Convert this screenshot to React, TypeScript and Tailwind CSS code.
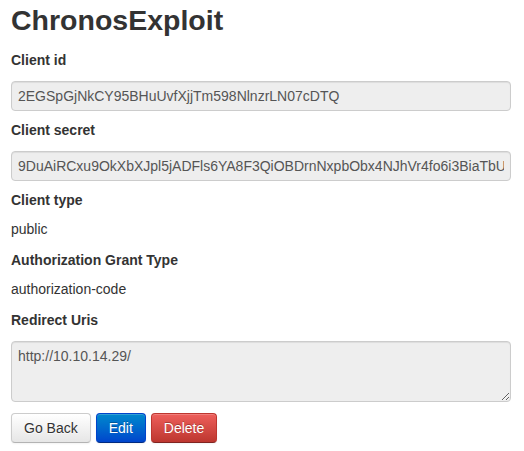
const inputClass =
  'block w-[500px] h-[30px] px-[6px] py-[4px] text-[14px] leading-[20px] text-[#555] bg-[#eeeeee] border border-[#cccccc] rounded-[4px] shadow-[inset_0_1px_1px_rgba(0,0,0,0.075)] outline-none cursor-not-allowed';

const btnBase =
  'h-[30px] px-[12px] py-[4px] text-[14px] leading-[20px] rounded-[4px] border shadow-[inset_0_1px_0_rgba(255,255,255,0.2),0_1px_2px_rgba(0,0,0,0.05)]';

const Label = ({ children, className = '' }: { children: string; className?: string }) => (
  <div className={`text-[14px] leading-[20px] font-bold ${className}`}>{children}</div>
);

export default function App() {
  return (
    <div className="min-h-screen bg-white pl-[11px] pr-[13px] text-[#333333] font-['Liberation_Sans',Arial,sans-serif]">
      <h2 className="mt-[5px] text-[28.5px] leading-[31px] font-bold">ChronosExploit</h2>

      <Label className="mt-[14px]">Client id</Label>
      <input
        readOnly
        disabled
        className={`${inputClass} mt-[11px]`}
        value="2EGSpGjNkCY95BHuUvfXjjTm598NlnzrLN07cDTQ"
      />

      <Label className="mt-[9px]">Client secret</Label>
      <input
        readOnly
        disabled
        className={`${inputClass} mt-[11px]`}
        value="9DuAiRCxu9OkXbXJpl5jADFls6YA8F3QiOBDrnNxpbObx4NJhVr4fo6i3BiaTbUmLpW2"
      />

      <Label className="mt-[9px]">Client type</Label>
      <div className="mt-[9px] text-[14px] leading-[20px]">public</div>

      <Label className="mt-[11px]">Authorization Grant Type</Label>
      <div className="mt-[9px] text-[14px] leading-[20px]">authorization-code</div>

      <Label className="mt-[11px]">Redirect Uris</Label>
      <textarea
        readOnly
        disabled
        className="mt-[11px] block w-[500px] h-[61px] px-[6px] py-[4px] text-[14px] leading-[20px] text-[#555] bg-[#eeeeee] border border-[#cccccc] rounded-[4px] shadow-[inset_0_1px_1px_rgba(0,0,0,0.075)] outline-none resize-y cursor-not-allowed"
        value="http://10.10.14.29/"
      />

      <div className="mt-[11px] flex gap-[5px]">
        <button
          className={`${btnBase} text-[#333] bg-gradient-to-b from-white to-[#e6e6e6] border-[#cccccc] border-b-[#b3b3b3] [text-shadow:0_1px_1px_rgba(255,255,255,0.75)]`}
        >
          Go Back
        </button>
        <button
          className={`${btnBase} text-white bg-gradient-to-b from-[#0088cc] to-[#0044cc] border-[#0044cc] border-b-[#002a80] [text-shadow:0_-1px_0_rgba(0,0,0,0.25)]`}
        >
          Edit
        </button>
        <button
          className={`${btnBase} text-white bg-gradient-to-b from-[#ee5f5b] to-[#bd362f] border-[#bd362f] border-b-[#802420] [text-shadow:0_-1px_0_rgba(0,0,0,0.25)]`}
        >
          Delete
        </button>
      </div>
    </div>
  );
}
